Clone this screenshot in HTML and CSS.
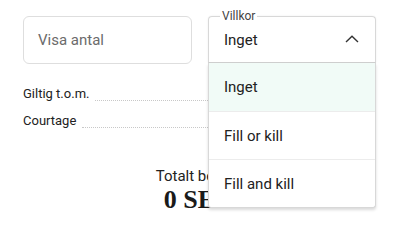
FILE: index.html
```html
<!DOCTYPE html>
<html lang="sv">
<head>
<meta charset="utf-8">
<link rel="stylesheet" href="styles.css">
</head>
<body>
<div class="page">
  <div class="fields">
    <div class="input">Visa antal</div>
    <div class="select">
      <span class="legend">Villkor</span>
      <div class="select-head">
        <span>Inget</span>
        <svg class="chev" width="14" height="8" viewBox="0 0 14 8"><polyline points="1,7 7,1.2 13,7" fill="none" stroke="#333" stroke-width="1.4"/></svg>
      </div>
      <ul class="menu">
        <li class="opt active">Inget</li>
        <li class="opt">Fill or kill</li>
        <li class="opt">Fill and kill</li>
      </ul>
    </div>
  </div>
  <div class="rows">
    <div class="row"><span class="lbl">Giltig t.o.m.</span><span class="dots"></span></div>
    <div class="row"><span class="lbl">Courtage</span><span class="dots"></span></div>
  </div>
  <div class="total">
    <div class="total-label">Totalt belopp</div>
    <div class="total-value">0 SEK</div>
  </div>
</div>
</body>
</html>
```
FILE: styles.css
```css
* { box-sizing: border-box; }
html, body { margin: 0; padding: 0; background: #fff; }
body { font-family: Roboto, "Noto Sans", sans-serif; color: #222; }
.page { padding: 16px 24px 0 23px; }
.fields { display: flex; gap: 16px; }
.input {
  width: 169px; height: 48px;
  border: 1px solid #dedede; border-radius: 6px;
  padding: 0 14px; display: flex; align-items: center;
  font-size: 15px; color: #6b6b6b;
}
.select { position: relative; width: 168px; height: 47px; }
.select-head {
  height: 47px; border: 1px solid #d8d8d8; border-bottom-color: #cfcfcf;
  border-radius: 4px 4px 0 0;
  display: flex; align-items: center; justify-content: space-between;
  padding: 0 16px 0 15px; font-size: 15px; color: #222;
  box-shadow: 0 0 2px rgba(0,0,0,0.08);
}
.legend {
  position: absolute; left: 12px; top: -6px;
  background: #fff; padding: 0 2px; font-size: 12px; line-height: 12px; color: #444;
}
.chev { display: block; margin-top: -1px; }
.menu {
  position: absolute; left: 0; right: 0; top: 100%;
  margin: 0; padding: 0; list-style: none; background: #fff;
  border: 1px solid #d8d8d8; border-top: none; border-radius: 0 0 3px 3px;
  box-shadow: 0 2px 3px rgba(0,0,0,0.15);
  z-index: 2;
}
.opt { height: 48px; display: flex; align-items: center; padding-left: 15px; font-size: 15px; color: #222; }
.opt + .opt { border-top: 1px solid #ececec; }
.opt.active { background: #f1fbf7; }
.rows { margin-top: 16px; width: 353px; }
.row { display: flex; align-items: baseline; height: 27px; line-height: 27px; font-size: 13px; color: #222; }
.lbl { white-space: nowrap; }
.dots { flex: 1; margin-left: 6px; border-bottom: 1px dotted #c8c8c8; transform: translateY(3px); }
.total { margin-top: 32px; text-align: center; width: 353px; }
.total-label { font-size: 15px; line-height: 20px; color: #222; }
.total-value { font-family: "Liberation Serif", serif; font-weight: bold; font-size: 26px; line-height: 28px; color: #1a1a1a; }
```
